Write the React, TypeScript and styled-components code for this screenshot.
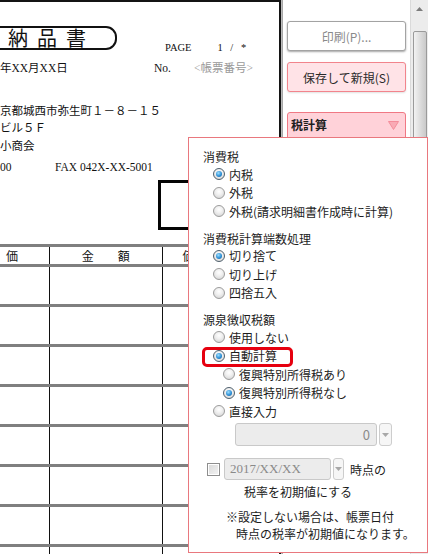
import { FC } from 'react';
import styled, { createGlobalStyle } from 'styled-components';

const GlobalStyle = createGlobalStyle`
  html, body {
    margin: 0;
    padding: 0;
    background: #fff;
  }
  body {
    font-family: "Noto Sans CJK JP", "Noto Sans", sans-serif;
  }
`;

const Screen = styled.div`
  position: relative;
  width: 428px;
  height: 554px;
  display: flex;
  overflow: hidden;
  background: #fff;
`;

/* ---------- delivery slip preview ---------- */

const DocPage = styled.div`
  flex: none;
  width: 279px;
  height: 552px;
  border-top: 2px solid #141414;
  border-right: 2px solid #141414;
  overflow: hidden;
  font-family: "Liberation Serif", "Noto Sans CJK JP", serif;
  font-size: 11px;
  color: #111;
`;

const TitleRow = styled.div`
  display: flex;
  align-items: flex-end;
  margin-top: 24px;
`;

const TitleBox = styled.div`
  box-sizing: border-box;
  flex: none;
  width: 129px;
  height: 24px;
  margin-left: -12px;
  padding-left: 18px;
  border: 2px solid #111;
  border-radius: 0 11px 11px 0;
  font-family: "Noto Sans CJK JP", serif;
  font-size: 20px;
  line-height: 20px;
  letter-spacing: 9px;
  white-space: nowrap;
`;

const PageInfo = styled.div`
  display: flex;
  gap: 26px;
  margin: 0 0 -4px 48px;
  font-size: 10.5px;
  line-height: 12px;
  white-space: nowrap;
`;

const PageNumber = styled.span`
  word-spacing: 5px;
`;

const DocLine = styled.div<{ $gap: number }>`
  display: flex;
  height: 16px;
  line-height: 16px;
  margin-top: ${p => p.$gap}px;
  font-size: 11.5px;
  white-space: nowrap;
`;

const DocCell = styled.span<{ $w?: number; $muted?: boolean }>`
  flex: none;
  width: ${p => (p.$w ? `${p.$w}px` : 'auto')};
  color: ${p => (p.$muted ? '#9a9a9a' : 'inherit')};
`;

const StampBox = styled.div`
  box-sizing: border-box;
  width: 130px;
  height: 50px;
  margin: 5px 0 0 158px;
  border: 3px solid #050505;
`;

const Table = styled.div`
  display: flex;
  flex-direction: column;
  margin-top: 14px;
`;

const TableRow = styled.div<{ $h: number }>`
  box-sizing: border-box;
  display: grid;
  grid-template-columns: 50px 112.5px 1fr;
  height: ${p => p.$h}px;
  border-top: 3px solid #7f7f7f;
`;

const TableCell = styled.div<{ $last?: boolean; $align?: string; $pad?: number }>`
  border-right: ${p => (p.$last ? 'none' : '1.5px solid #111')};
  padding-left: ${p => p.$pad ?? 0}px;
  text-align: ${p => p.$align ?? 'left'};
  font-family: "Noto Sans CJK JP", serif;
  font-size: 12px;
  line-height: 17px;
  white-space: nowrap;
`;

/* ---------- side panel ---------- */

const Splitter = styled.div`
  flex: none;
  width: 2px;
  background: linear-gradient(90deg, #c8c8c8, #9c9c9c);
`;

const SidePanel = styled.div`
  flex: 1;
  display: flex;
`;

const SideContent = styled.div`
  flex: 1;
  display: flex;
  flex-direction: column;
  padding: 21px 4px 0 4px;
`;

const SideButton = styled.div<{ $tone: 'plain' | 'pink'; $gap: number }>`
  box-sizing: border-box;
  height: 30px;
  margin-top: ${p => p.$gap}px;
  display: flex;
  align-items: center;
  justify-content: center;
  border-radius: 3px;
  border: 1px solid ${p => (p.$tone === 'plain' ? '#a3a3a3' : '#f2848c')};
  background: ${p => (p.$tone === 'plain' ? '#fff' : '#ffe3e7')};
  color: ${p => (p.$tone === 'plain' ? '#8a8a8a' : '#2a2a2a')};
  box-shadow: 0 1px 2px rgba(0, 0, 0, ${p => (p.$tone === 'plain' ? 0.35 : 0.12)});
  font-size: 12px;
`;

const SectionHeader = styled.div`
  box-sizing: border-box;
  height: 32px;
  margin-top: 20px;
  padding: 0 6px 0 3px;
  display: flex;
  align-items: flex-start;
  justify-content: space-between;
  border: 1px solid #f07884;
  border-radius: 3px;
  background: #ffd2d9;
  color: #1e1e1e;
  font-size: 12px;
  font-weight: 700;
  line-height: 24px;
`;

const Scrollbar = styled.div`
  flex: none;
  width: 17px;
  display: flex;
  flex-direction: column;
  align-items: center;
  border-left: 1px solid #dadada;
  background: #ececec;
`;

const ScrollArrow = styled.div`
  height: 17px;
  display: flex;
  align-items: center;
  justify-content: center;
`;

const ScrollThumb = styled.div`
  box-sizing: border-box;
  width: 14px;
  height: 320px;
  margin-top: 14px;
  border: 1px solid #9a9a9a;
  border-radius: 2px;
  background: linear-gradient(90deg, #f2f2f2, #d9d9d9 60%, #c9c9c9);
`;

/* ---------- tax settings dropdown ---------- */

const Popup = styled.div`
  position: absolute;
  left: 188px;
  top: 137px;
  box-sizing: border-box;
  width: 240px;
  height: 416px;
  padding-top: 10px;
  border: 1px solid #e9787e;
  background: #fff;
  color: #1c1c1c;
  font-size: 12px;
`;

const GroupTitle = styled.div<{ $gap?: number }>`
  height: 17px;
  line-height: 17px;
  margin-top: ${p => p.$gap ?? 0}px;
  padding-left: 14px;
`;

const RadioRow = styled.div<{ $indent: number; $marked?: boolean }>`
  position: relative;
  display: flex;
  align-items: center;
  gap: 4px;
  height: 18.5px;
  padding-left: ${p => p.$indent}px;
  white-space: nowrap;

  &::after {
    content: '';
    display: ${p => (p.$marked ? 'block' : 'none')};
    position: absolute;
    left: 13px;
    top: 0;
    width: 91px;
    height: 20px;
    box-sizing: border-box;
    border: 3px solid #e6000f;
    border-radius: 5px;
  }
`;

const RadioDot = styled.span<{ $on: boolean }>`
  position: relative;
  flex: none;
  box-sizing: border-box;
  width: 12px;
  height: 12px;
  border-radius: 50%;
  border: 1px solid ${p => (p.$on ? '#4e5f6c' : '#9c9c9c')};
  background: radial-gradient(circle at 50% 35%, #ffffff 0, #f0f0f0 40%, #cfcfcf 100%);

  &::after {
    content: '';
    display: ${p => (p.$on ? 'block' : 'none')};
    position: absolute;
    inset: 2px;
    border-radius: 50%;
    background: radial-gradient(circle at 40% 35%, #9ee0ff 0, #2d8fd6 55%, #175d98 100%);
  }
`;

const FieldRow = styled.div<{ $gap: number; $indent: number }>`
  display: flex;
  align-items: center;
  margin-top: ${p => p.$gap}px;
  padding-left: ${p => p.$indent}px;
  white-space: nowrap;
`;

const Field = styled.div<{ $w: number; $h: number; $serif?: boolean }>`
  box-sizing: border-box;
  width: ${p => p.$w}px;
  height: ${p => p.$h}px;
  display: flex;
  align-items: center;
  justify-content: ${p => (p.$serif ? 'flex-start' : 'flex-end')};
  padding: 0 6px 0 5px;
  border: 1px solid #c9c9c9;
  border-radius: 3px;
  background: #ececec;
  color: #8a8a8a;
  font-family: ${p => (p.$serif ? '"Liberation Serif", serif' : 'inherit')};
  font-size: 13px;
`;

const DropButton = styled.div<{ $w: number; $h: number; $gap: number }>`
  box-sizing: border-box;
  width: ${p => p.$w}px;
  height: ${p => p.$h}px;
  margin-left: ${p => p.$gap}px;
  display: flex;
  align-items: center;
  justify-content: center;
  border: 1px solid #cdcdcd;
  border-radius: 3px;
  background: #f6f6f6;
`;

const CheckBox = styled.span`
  flex: none;
  box-sizing: border-box;
  width: 13px;
  height: 13px;
  margin-right: 4px;
  border: 1px solid #8e8e8e;
  background: linear-gradient(135deg, #d8d8d8, #f4f4f4);
  box-shadow: inset 0 0 0 1px #fff;
`;

const TrailingLabel = styled.span`
  margin-left: 6px;
`;

const Note = styled.div<{ $gap: number; $indent: number }>`
  height: 17px;
  line-height: 17px;
  margin-top: ${p => p.$gap}px;
  padding-left: ${p => p.$indent}px;
  white-space: nowrap;
`;

const SmallCaret: FC<{ color: string }> = ({ color }) => (
  <svg width="7" height="4" viewBox="0 0 7 4">
    <polygon points="0,0 7,0 3.5,4" fill={color} />
  </svg>
);

interface RadioOption {
  label: string;
  on?: boolean;
  indent?: number;
  marked?: boolean;
}

const RadioGroup: FC<{ title: string; gap?: number; options: RadioOption[] }> = ({ title, gap, options }) => (
  <>
    <GroupTitle $gap={gap}>{title}</GroupTitle>
    {options.map(o => (
      <RadioRow key={o.label} $indent={o.indent ?? 24} $marked={o.marked}>
        <RadioDot $on={!!o.on} />
        {o.label}
      </RadioRow>
    ))}
  </>
);

const bodyRows = [0, 1, 2, 3, 4, 5, 6, 7];

const App: FC = () => {
  return (
    <Screen>
      <GlobalStyle />
      <DocPage>
        <TitleRow>
          <TitleBox>納品書</TitleBox>
          <PageInfo>
            <span>PAGE</span>
            <PageNumber>1 / *</PageNumber>
          </PageInfo>
        </TitleRow>
        <DocLine $gap={10}>
          <DocCell $w={154}>年XX月XX日</DocCell>
          <DocCell $w={40}>No.</DocCell>
          <DocCell $muted>&lt;帳票番号&gt;</DocCell>
        </DocLine>
        <DocLine $gap={27}>京都城西市弥生町１－８－１５</DocLine>
        <DocLine $gap={1}>ビル５Ｆ</DocLine>
        <DocLine $gap={2}>小商会</DocLine>
        <DocLine $gap={5}>
          <DocCell $w={55}>00</DocCell>
          <DocCell>FAX 042X-XX-5001</DocCell>
        </DocLine>
        <StampBox />
        <Table>
          <TableRow $h={20}>
            <TableCell $pad={6}>価</TableCell>
            <TableCell $align="center">金　　額</TableCell>
            <TableCell $last $pad={20}>価</TableCell>
          </TableRow>
          {bodyRows.map(r => (
            <TableRow key={r} $h={40}>
              <TableCell />
              <TableCell />
              <TableCell $last />
            </TableRow>
          ))}
        </Table>
      </DocPage>

      <Splitter />

      <SidePanel>
        <SideContent>
          <SideButton $tone="plain" $gap={0}>印刷(P)...</SideButton>
          <SideButton $tone="pink" $gap={11}>保存して新規(S)</SideButton>
          <SectionHeader>
            <span>税計算</span>
            <svg width="11" height="9" viewBox="0 0 11 9" style={{ marginTop: 8 }}>
              <polygon points="0.5,0.5 10.5,0.5 5.5,8.5" fill="#f9aab5" stroke="#f48c9a" strokeWidth="1" />
            </svg>
          </SectionHeader>
        </SideContent>
        <Scrollbar>
          <ScrollArrow>
            <svg width="7" height="4" viewBox="0 0 7 4">
              <polygon points="3.5,0 7,4 0,4" fill="#7c7c7c" />
            </svg>
          </ScrollArrow>
          <ScrollThumb />
        </Scrollbar>
      </SidePanel>

      <Popup>
        <RadioGroup
          title="消費税"
          options={[
            { label: '内税', on: true },
            { label: '外税' },
            { label: '外税(請求明細書作成時に計算)' },
          ]}
        />
        <RadioGroup
          title="消費税計算端数処理"
          gap={9}
          options={[
            { label: '切り捨て', on: true },
            { label: '切り上げ' },
            { label: '四捨五入' },
          ]}
        />
        <RadioGroup
          title="源泉徴収税額"
          gap={9}
          options={[
            { label: '使用しない' },
            { label: '自動計算', on: true, marked: true },
            { label: '復興特別所得税あり', indent: 34 },
            { label: '復興特別所得税なし', indent: 34, on: true },
            { label: '直接入力' },
          ]}
        />
        <FieldRow $gap={2.5} $indent={46}>
          <Field $w={142} $h={23}>0</Field>
          <DropButton $w={13} $h={23} $gap={2}>
            <SmallCaret color="#a8a8a8" />
          </DropButton>
        </FieldRow>
        <FieldRow $gap={12} $indent={18}>
          <CheckBox />
          <Field $w={107} $h={22} $serif>2017/XX/XX</Field>
          <DropButton $w={11} $h={22} $gap={2}>
            <SmallCaret color="#a8a8a8" />
          </DropButton>
          <TrailingLabel>時点の</TrailingLabel>
        </FieldRow>
        <Note $gap={3} $indent={55}>税率を初期値にする</Note>
        <Note $gap={8} $indent={37}>※設定しない場合は、帳票日付</Note>
        <Note $gap={0} $indent={47}>時点の税率が初期値になります。</Note>
      </Popup>
    </Screen>
  );
};

export default App;
